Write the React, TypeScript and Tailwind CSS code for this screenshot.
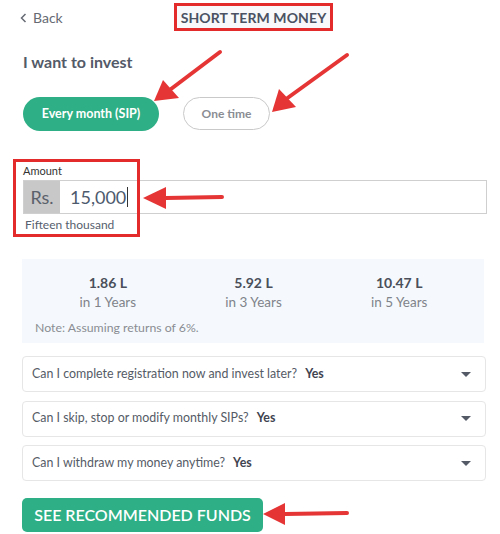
import React from "react";

const green = "bg-[#2eaf85]";

function Caret() {
  return (
    <svg width="10" height="5" viewBox="0 0 10 5" className="mr-[14px]">
      <path d="M0 0 L10 0 L5 5 Z" fill="#555b66" />
    </svg>
  );
}

function Faq({ q }: { q: string }) {
  return (
    <div className="flex h-[36px] items-center justify-between rounded-[4px] border border-[#e6e6e6] bg-white pl-[9px]">
      <div className="text-[12.4px] text-[#555b66]">
        {q}
        <span className="ml-[8px] font-bold text-[#3f4450]">Yes</span>
      </div>
      <Caret />
    </div>
  );
}

function Arrow({ x1, y1, x2, y2, a, b }: { x1: number; y1: number; x2: number; y2: number; a: [number, number]; b: [number, number] }) {
  const mx = (a[0] + b[0]) / 2;
  const my = (a[1] + b[1]) / 2;
  return (
    <g>
      <line x1={x1} y1={y1} x2={mx} y2={my} stroke="#e53535" strokeWidth="4" strokeLinecap="round" />
      <polygon points={`${x2},${y2} ${a[0]},${a[1]} ${b[0]},${b[1]}`} fill="#e53535" />
    </g>
  );
}

export default function App() {
  return (
    <div className="relative h-[534px] w-[500px] overflow-hidden bg-white" style={{ fontFamily: "Lato, 'Open Sans', sans-serif" }}>
      <div className="px-[22px]">
        {/* header */}
        <div className="relative flex h-[34px] items-center">
          <div className="flex items-center text-[14px] text-[#666a73]">
            <svg width="7" height="10" viewBox="0 0 7 10" className="-ml-[2px] mr-[6px] mt-[2px]">
              <path d="M5.5 1 L1.5 5 L5.5 9" fill="none" stroke="#666a73" strokeWidth="1.5" />
            </svg>
            Back
          </div>
          <div className="ml-[111px] flex h-[28px] items-center border-[3px] border-[#e32b2b] bg-[#f8f9fa] px-[4px] text-[14px] font-bold tracking-[0.1px] text-[#4a5263]">
            SHORT TERM MONEY
          </div>
        </div>

        <div className="mt-[18px] pl-[1px] text-[16px] font-bold leading-[20px] text-[#535a68]">I want to invest</div>

        <div className="mt-[25px] flex gap-[24px] pl-[1px]">
          <div className={`flex h-[34px] w-[136px] items-center justify-center rounded-full ${green} text-[12.5px] font-bold text-white`}>
            Every month (SIP)
          </div>
          <div className="flex h-[33px] w-[87px] items-center justify-center rounded-full border border-[#c9c9c9] text-[12px] font-bold text-[#8a8d93]">
            One time
          </div>
        </div>

        {/* amount */}
        <div className="mt-[33px] pl-[1px]">
          <div className="text-[11px] leading-[14px] text-[#333]">Amount</div>
          <div className="mt-[2px] flex h-[34px] w-[464px] items-stretch border border-[#cfcfcf]">
            <div className="flex w-[36px] items-center justify-center bg-[#c8c8c8] text-[18px] text-[#5b616b]">Rs.</div>
            <div className="flex items-center pl-[10px] text-[18px] text-[#4d5a6e]">
              15,000
              <span className="ml-[1px] inline-block h-[20px] w-[1px] bg-[#333]" />
            </div>
          </div>
          <div className="mt-[3px] pl-[2px] text-[12px] leading-[16px] text-[#56606e]">Fifteen thousand</div>
        </div>

        {/* projection */}
        <div className="mt-[26px] h-[84px] w-[462px] bg-[#f5f9fd] pl-[1px]">
          <div className="grid grid-cols-3 px-[12px] pt-[15px] text-center">
            {[
              ["1.86 L", "in 1 Years"],
              ["5.92 L", "in 3 Years"],
              ["10.47 L", "in 5 Years"],
            ].map(([v, y]) => (
              <div key={y}>
                <div className="text-[14px] font-bold leading-[18px] text-[#4a4f5a]">{v}</div>
                <div className="text-[13.5px] leading-[20px] text-[#80838a]">{y}</div>
              </div>
            ))}
          </div>
          <div className="mt-[9px] pl-[12px] text-[12.3px] leading-[14px] text-[#8a8d93]">Note: Assuming returns of 6%.</div>
        </div>

        {/* faqs */}
        <div className="mt-[13px] flex w-[464px] flex-col gap-[8.5px]">
          <Faq q="Can I complete registration now and invest later?" />
          <Faq q="Can I skip, stop or modify monthly SIPs?" />
          <Faq q="Can I withdraw my money anytime?" />
        </div>

        <div className={`mt-[17px] flex h-[34px] w-[241px] items-center justify-center rounded-[5px] ${green} text-[16px] font-semibold text-white`}>
          SEE RECOMMENDED FUNDS
        </div>
      </div>

      {/* annotation overlays */}
      <div className="pointer-events-none absolute left-[13px] top-[159px] h-[78px] w-[127px] border-[3px] border-[#e32b2b]" />
      <svg className="pointer-events-none absolute left-0 top-0" width="500" height="534">
        <Arrow x1={220} y1={52} x2={154} y2={101} a={[163, 80]} b={[179, 98]} />
        <Arrow x1={347} y1={55} x2={272} y2={112} a={[279, 89]} b={[296, 107]} />
        <Arrow x1={222} y1={197} x2={143} y2={198} a={[166, 187]} b={[166, 209]} />
        <Arrow x1={347} y1={513} x2={263} y2={514} a={[285, 503]} b={[285, 525]} />
      </svg>
    </div>
  );
}
